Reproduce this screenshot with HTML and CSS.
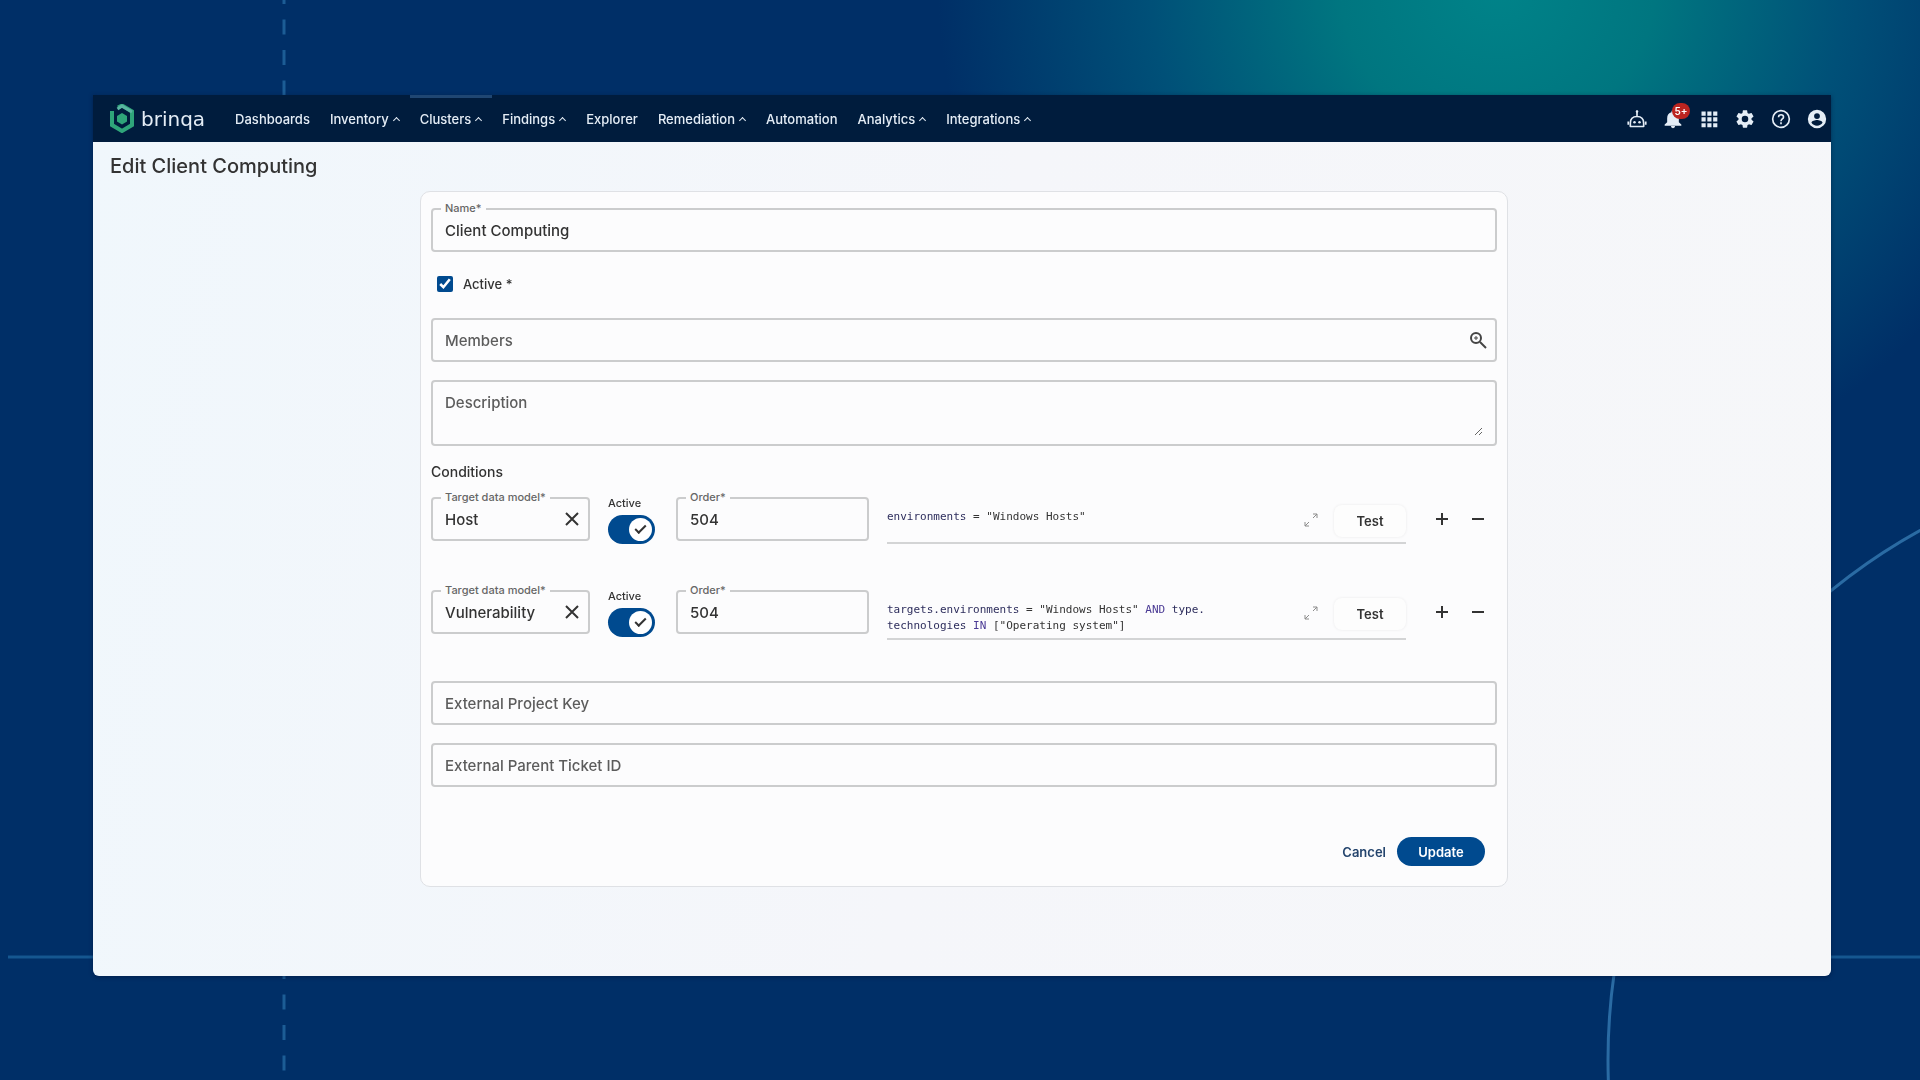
FILE: index.html
```
<!doctype html>
<html lang="en">
	<head>
		<title>Edit Client Computing</title>
		<meta charset="utf-8" />
		<link rel="stylesheet" href="styles.css">
	</head>

	<body>
		<svg class="backdrop" viewBox="0 0 1920 1080" preserveAspectRatio="xMidYMid slice" fill="none" aria-hidden="true">
			<path d="M284 -11V1080" stroke="#1c5d95" stroke-width="3" stroke-dasharray="15 15.47"/>
			<path d="M8 957H1920" stroke="#155790" stroke-width="3"/>
			<circle cx="2213" cy="1060" r="605" stroke="#2a6ba3" stroke-width="3"/>
		</svg>

		<div class="window">
			<header class="topbar">
				<a class="logo" href="#">
					<svg width="24" height="29" viewBox="0 0 24 29" fill="none">
						<path d="M8 3.500L12 1.500L22 7.500V21L12 27L2 21V7" stroke="#2fa57a" stroke-width="4"/>
						<path d="M7.500 5L12 2L22 8" stroke="#5bb5a2" stroke-width="3"/>
						<path d="M12 9L17 12V17.500L12 20.500L7 17.500V12Z" fill="#2fa57a"/>
					</svg>
					<span>brinqa</span>
				</a>
				<nav class="menu">
					<a href="#">Dashboards</a>
					<a href="#" class="more">Inventory</a>
					<a href="#" class="more current">Clusters</a>
					<a href="#" class="more">Findings</a>
					<a href="#">Explorer</a>
					<a href="#" class="more">Remediation</a>
					<a href="#">Automation</a>
					<a href="#" class="more">Analytics</a>
					<a href="#" class="more">Integrations</a>
				</nav>
				<div class="tools">
					<button type="button" aria-label="Assistant">
						<svg viewBox="0 0 24 24" fill="none" stroke="currentColor" stroke-width="2">
							<path d="M12 2V8M4 21H20V17C20 12 17 9 12 9S4 12 4 17Z" stroke-linejoin="round"/>
							<path d="M1.500 15V19M22.500 15V19"/>
							<circle cx="9" cy="16" r="1.500" fill="currentColor" stroke="none"/>
							<circle cx="15" cy="16" r="1.500" fill="currentColor" stroke="none"/>
							<circle cx="12" cy="3" r="1.500" fill="currentColor" stroke="none"/>
						</svg>
					</button>
					<button type="button" aria-label="Notifications">
						<svg viewBox="0 0 24 24" fill="currentColor"><path d="M12 23a2.500 2.500 0 0 0 2.500-2.500h-5A2.500 2.500 0 0 0 12 23zm7-7v-5c0-3.500-1.900-6.200-5.200-7V3a1.800 1.800 0 0 0-3.600 0v1C6.900 4.800 5 7.500 5 11v5l-3 2.500V20h20v-1.500z"/></svg>
						<span class="badge">5+</span>
					</button>
					<button type="button" aria-label="Apps">
						<svg viewBox="0 0 24 24" fill="currentColor"><path d="M3 3h5v5H3zM10 3h5v5h-5zM17 3h5v5h-5zM3 10h5v5H3zM10 10h5v5h-5zM17 10h5v5h-5zM3 17h5v5H3zM10 17h5v5h-5zM17 17h5v5h-5z"/></svg>
					</button>
					<button type="button" aria-label="Settings">
						<svg viewBox="1 1 22 22" fill="currentColor"><path d="M19.140 12.940c.040-.300.060-.610.060-.940 0-.320-.020-.640-.070-.940l2.030-1.580c.180-.140.230-.410.120-.610l-1.920-3.320c-.120-.220-.370-.290-.590-.220l-2.390.960c-.500-.380-1.030-.700-1.620-.940L14.400 2.810c-.040-.240-.240-.410-.480-.410h-3.840c-.240 0-.430.170-.470.410L9.250 5.350c-.590.240-1.130.570-1.620.940l-2.390-.960c-.220-.080-.470 0-.590.220L2.740 8.870c-.120.210-.080.470.120.610l2.030 1.580c-.050.300-.090.630-.090.940s.020.640.070.940l-2.030 1.580c-.180.140-.230.410-.120.610l1.920 3.320c.120.220.370.290.590.220l2.390-.960c.500.380 1.030.700 1.620.940l.360 2.540c.050.240.240.410.480.410h3.840c.240 0 .440-.170.470-.410l.360-2.540c.590-.240 1.130-.560 1.620-.940l2.390.960c.220.080.470 0 .590-.220l1.920-3.320c.120-.220.070-.470-.120-.610zM12 15.600a3.600 3.600 0 1 1 0-7.200 3.600 3.600 0 0 1 0 7.200z"/></svg>
					</button>
					<button type="button" aria-label="Help">
						<svg viewBox="0 0 24 24" fill="none" stroke="currentColor" stroke-width="2"><circle cx="12" cy="12" r="10"/><path d="M9 10c0-4 6-4 6-.5 0 2.500-3 2.500-3 5.200M12 16v2.200"/></svg>
					</button>
					<button type="button" aria-label="Account">
						<svg viewBox="0 0 24 24" fill="currentColor"><path d="M12 1a11 11 0 1 0 0 22 11 11 0 0 0 0-22zm0 4a3.500 3.500 0 1 1 0 7 3.500 3.500 0 0 1 0-7zm0 15c-3 0-5.300-1.400-6.600-3.500.1-2.100 4.400-3.200 6.600-3.200s6.500 1.100 6.600 3.200C17.300 18.600 15 20 12 20z"/></svg>
					</button>
				</div>
			</header>

			<main>
				<h1>Edit Client Computing</h1>

				<form class="card">
					<div class="field">
						<label for="name">Name*</label>
						<input type="text" id="name" value="Client Computing">
					</div>

					<div class="check">
						<input type="checkbox" id="active" checked>
						<label for="active">Active *</label>
					</div>

					<div class="field">
						<input type="text" placeholder="Members" aria-label="Members">
						<button type="button" class="icon" aria-label="Find members">
							<svg width="18" height="18" viewBox="0 0 18 18" fill="none" stroke="#444" stroke-width="2"><circle cx="7" cy="7" r="5"/><path d="M11 11L17 17"/><path d="M5 7H9M7 5V9" stroke-width="1"/></svg>
						</button>
					</div>

					<div class="field area">
						<textarea placeholder="Description" aria-label="Description"></textarea>
					</div>

					<h2>Conditions</h2>

					<div class="condition">
						<div class="field">
							<label for="model1">Target data model*</label>
							<input type="text" id="model1" value="Host">
							<button type="button" class="icon" aria-label="Clear">
								<svg width="16" height="16" viewBox="0 0 16 16" stroke="#333" stroke-width="2"><path d="M2 2L14 14M14 2L2 14"/></svg>
							</button>
						</div>
						<div class="toggle">
							<label for="on1">Active</label>
							<input type="checkbox" id="on1" role="switch" checked>
						</div>
						<div class="field">
							<label for="order1">Order*</label>
							<input type="text" id="order1" value="504">
						</div>
						<div class="query">
							<code contenteditable="true" spellcheck="false"><b>environments</b> = "Windows Hosts"</code>
							<button type="button" class="expand" aria-label="Expand">
								<svg width="16" height="16" viewBox="0 0 16 16" fill="none" stroke="#8c8c8c"><path d="M10 2H14V6M14 2L10 6M2 10V14H6M2 14L6 10"/></svg>
							</button>
							<button type="button" class="test">Test</button>
						</div>
						<div class="rowtools">
							<button type="button" aria-label="Add"><svg width="14" height="14" viewBox="0 0 14 14" stroke="#333" stroke-width="2"><path d="M7 1V13M1 7H13"/></svg></button>
							<button type="button" aria-label="Remove"><svg width="14" height="14" viewBox="0 0 14 14" stroke="#333" stroke-width="2"><path d="M1 7H13"/></svg></button>
						</div>
					</div>

					<div class="condition">
						<div class="field">
							<label for="model2">Target data model*</label>
							<input type="text" id="model2" value="Vulnerability">
							<button type="button" class="icon" aria-label="Clear">
								<svg width="16" height="16" viewBox="0 0 16 16" stroke="#333" stroke-width="2"><path d="M2 2L14 14M14 2L2 14"/></svg>
							</button>
						</div>
						<div class="toggle">
							<label for="on2">Active</label>
							<input type="checkbox" id="on2" role="switch" checked>
						</div>
						<div class="field">
							<label for="order2">Order*</label>
							<input type="text" id="order2" value="504">
						</div>
						<div class="query">
							<code contenteditable="true" spellcheck="false"><b>targets.environments</b> = "Windows Hosts" <i>AND</i> <b>type.<br>technologies</b> <i>IN</i> ["Operating system"]</code>
							<button type="button" class="expand" aria-label="Expand">
								<svg width="16" height="16" viewBox="0 0 16 16" fill="none" stroke="#8c8c8c"><path d="M10 2H14V6M14 2L10 6M2 10V14H6M2 14L6 10"/></svg>
							</button>
							<button type="button" class="test">Test</button>
						</div>
						<div class="rowtools">
							<button type="button" aria-label="Add"><svg width="14" height="14" viewBox="0 0 14 14" stroke="#333" stroke-width="2"><path d="M7 1V13M1 7H13"/></svg></button>
							<button type="button" aria-label="Remove"><svg width="14" height="14" viewBox="0 0 14 14" stroke="#333" stroke-width="2"><path d="M1 7H13"/></svg></button>
						</div>
					</div>

					<div class="field">
						<input type="text" placeholder="External Project Key" aria-label="External Project Key">
					</div>
					<div class="field">
						<input type="text" placeholder="External Parent Ticket ID" aria-label="External Parent Ticket ID">
					</div>

					<div class="actions">
						<button type="button" class="cancel">Cancel</button>
						<button type="submit" class="update">Update</button>
					</div>
				</form>
			</main>
		</div>
	</body>
</html>
```
FILE: styles.css
```
*{
	margin:0;
	padding:0;
	box-sizing:border-box;
}

body{
	display:flex;
	min-height:100vh;
	padding:95px 89px 104px 93px;
	background:radial-gradient(ellipse 560px 520px at 78% -1%, #008389 0%, #007680 28%, #005078 62%, rgba(0,47,103,0) 100%) #002f67;
	color:#333;
	font:500 14px/20px Inter, "Liberation Sans", sans-serif;
}

button, input, textarea{
	border:0;
	background:none;
	color:inherit;
	font:inherit;
}
button{
	cursor:pointer;
}
svg{
	display:block;
}

/* lines behind the window */
.backdrop{
	position:fixed;
	z-index:-1;
	top:0;
	left:0;
	width:100%;
	height:100%;
}

.window{
	flex:1;
	min-width:0;
	border-radius:0 0 6px 6px;
	background:linear-gradient(100deg, #f0f7fc, #f5f6fa 50%, #f6f7f9);
	box-shadow:0 1px 4px rgba(0,15,50,.5);
}

/* top bar */
.topbar{
	display:flex;
	align-items:center;
	height:47px;
	padding:0 4px 0 17px;
	background:#001c3d;
	color:#e4edf6;
}
.topbar a{
	color:inherit;
	text-decoration:none;
}
.logo{
	display:flex;
	align-items:center;
	gap:7px;
	margin-right:20px;
	font:20px/28px "DejaVu Sans", sans-serif;
}
.menu{
	display:flex;
	align-self:stretch;
	font-size:13px;
}
.menu a{
	display:flex;
	align-items:center;
	padding:0 10px;
	border-top:3px solid transparent;
	border-bottom:3px solid transparent;
}
.menu .current{
	border-top-color:#1f4672;
}
.more::after{
	content:"";
	width:4px;
	height:4px;
	margin:3px 1px 0 5px;
	border:solid #e4edf6;
	border-width:1px 0 0 1px;
	transform:rotate(45deg);
}
.tools{
	display:flex;
	gap:16px;
	margin-left:auto;
}
.tools button{
	position:relative;
}
.tools svg{
	width:20px;
	height:20px;
}
.badge{
	position:absolute;
	top:-6px;
	left:9px;
	width:18px;
	border-radius:8px;
	background:#bb2420;
	color:#fff;
	font-size:10px;
	font-weight:600;
	line-height:16px;
}

/* page */
main{
	padding:14px 13px 16px 17px;
}
h1{
	margin-bottom:15px;
	font-size:20px;
	font-weight:500;
	line-height:20px;
}
.card{
	max-width:1088px;
	margin:0 auto;
	padding:16px 10px 20px;
	border:1px solid #dfe1e5;
	border-radius:10px;
	background:#fcfcfd;
}

.field{
	position:relative;
	display:flex;
	align-items:center;
	height:44px;
	margin-bottom:18px;
	border:2px solid #cbcccd;
	border-radius:4px;
	font-size:15px;
}
.field input{
	flex:1;
	min-width:0;
	height:100%;
	padding:0 12px;
}
.field label{
	position:absolute;
	top:-9px;
	left:8px;
	padding:0 4px;
	background:#fcfcfd;
	color:#666;
	font-size:11px;
	line-height:14px;
}
.field ::placeholder{
	color:#5c5c5c;
	opacity:1;
}
.icon{
	margin-right:8px;
}
.area{
	height:66px;
	padding:11px 12px 8px;
}
.area textarea{
	width:100%;
	height:100%;
	resize:vertical;
}

.check{
	display:flex;
	align-items:center;
	gap:10px;
	height:28px;
	margin:0 0 20px 6px;
	font-size:13px;
}
.check input{
	width:16px;
	height:16px;
	accent-color:#004a8f;
}

h2{
	margin-bottom:17px;
	font-size:14px;
	font-weight:500;
	line-height:16px;
}

/* conditions */
.condition{
	display:grid;
	grid-template-columns:159px 50px 193px 1fr 73px;
	align-items:start;
	gap:18px;
	margin-bottom:46px;
}
.condition + .field{
	margin-top:-5px;
}
.condition .field{
	margin:0;
}
.toggle label{
	display:block;
	margin-bottom:6px;
	font-size:11px;
	line-height:12px;
}
.toggle input{
	display:block;
	position:relative;
	width:47px;
	height:29px;
	border-radius:15px;
	background:#004a8f;
	appearance:none;
}
.toggle input::before{
	content:"";
	position:absolute;
	top:3px;
	right:3px;
	width:23px;
	height:23px;
	border-radius:50%;
	background:#fff;
}
.toggle input::after{
	content:"";
	position:absolute;
	top:10px;
	right:9px;
	width:9px;
	height:4px;
	border:solid #333;
	border-width:0 0 2px 2px;
	transform:rotate(-45deg);
}
.query{
	display:flex;
	min-height:47px;
	border-bottom:2px solid #d3d4d5;
}
.query code{
	flex:1;
	padding:12px 0 4px;
	outline:0;
	font:11px/16px "DejaVu Sans Mono", monospace;
}
.query b{
	color:#2d2d5c;
	font-weight:400;
}
.query i{
	color:#4a3a94;
	font-style:normal;
}
.expand{
	height:45px;
	margin-right:15px;
}
.test{
	width:72px;
	height:32px;
	margin-top:8px;
	border-radius:8px;
	background:#fdfdfd;
	box-shadow:0 0 3px rgba(0,0,0,.08);
	font-size:13px;
	font-weight:600;
}
.rowtools{
	display:flex;
	height:44px;
}
.rowtools button{
	width:36px;
}
.rowtools svg{
	margin:0 auto;
}

.actions{
	display:flex;
	justify-content:flex-end;
	gap:11px;
	margin:50px 12px 0 0;
	font-size:13px;
	font-weight:600;
}
.cancel{
	color:#24446d;
}
.update{
	width:88px;
	height:29px;
	border-radius:15px;
	background:#004a8f;
	color:#fff;
}
```
